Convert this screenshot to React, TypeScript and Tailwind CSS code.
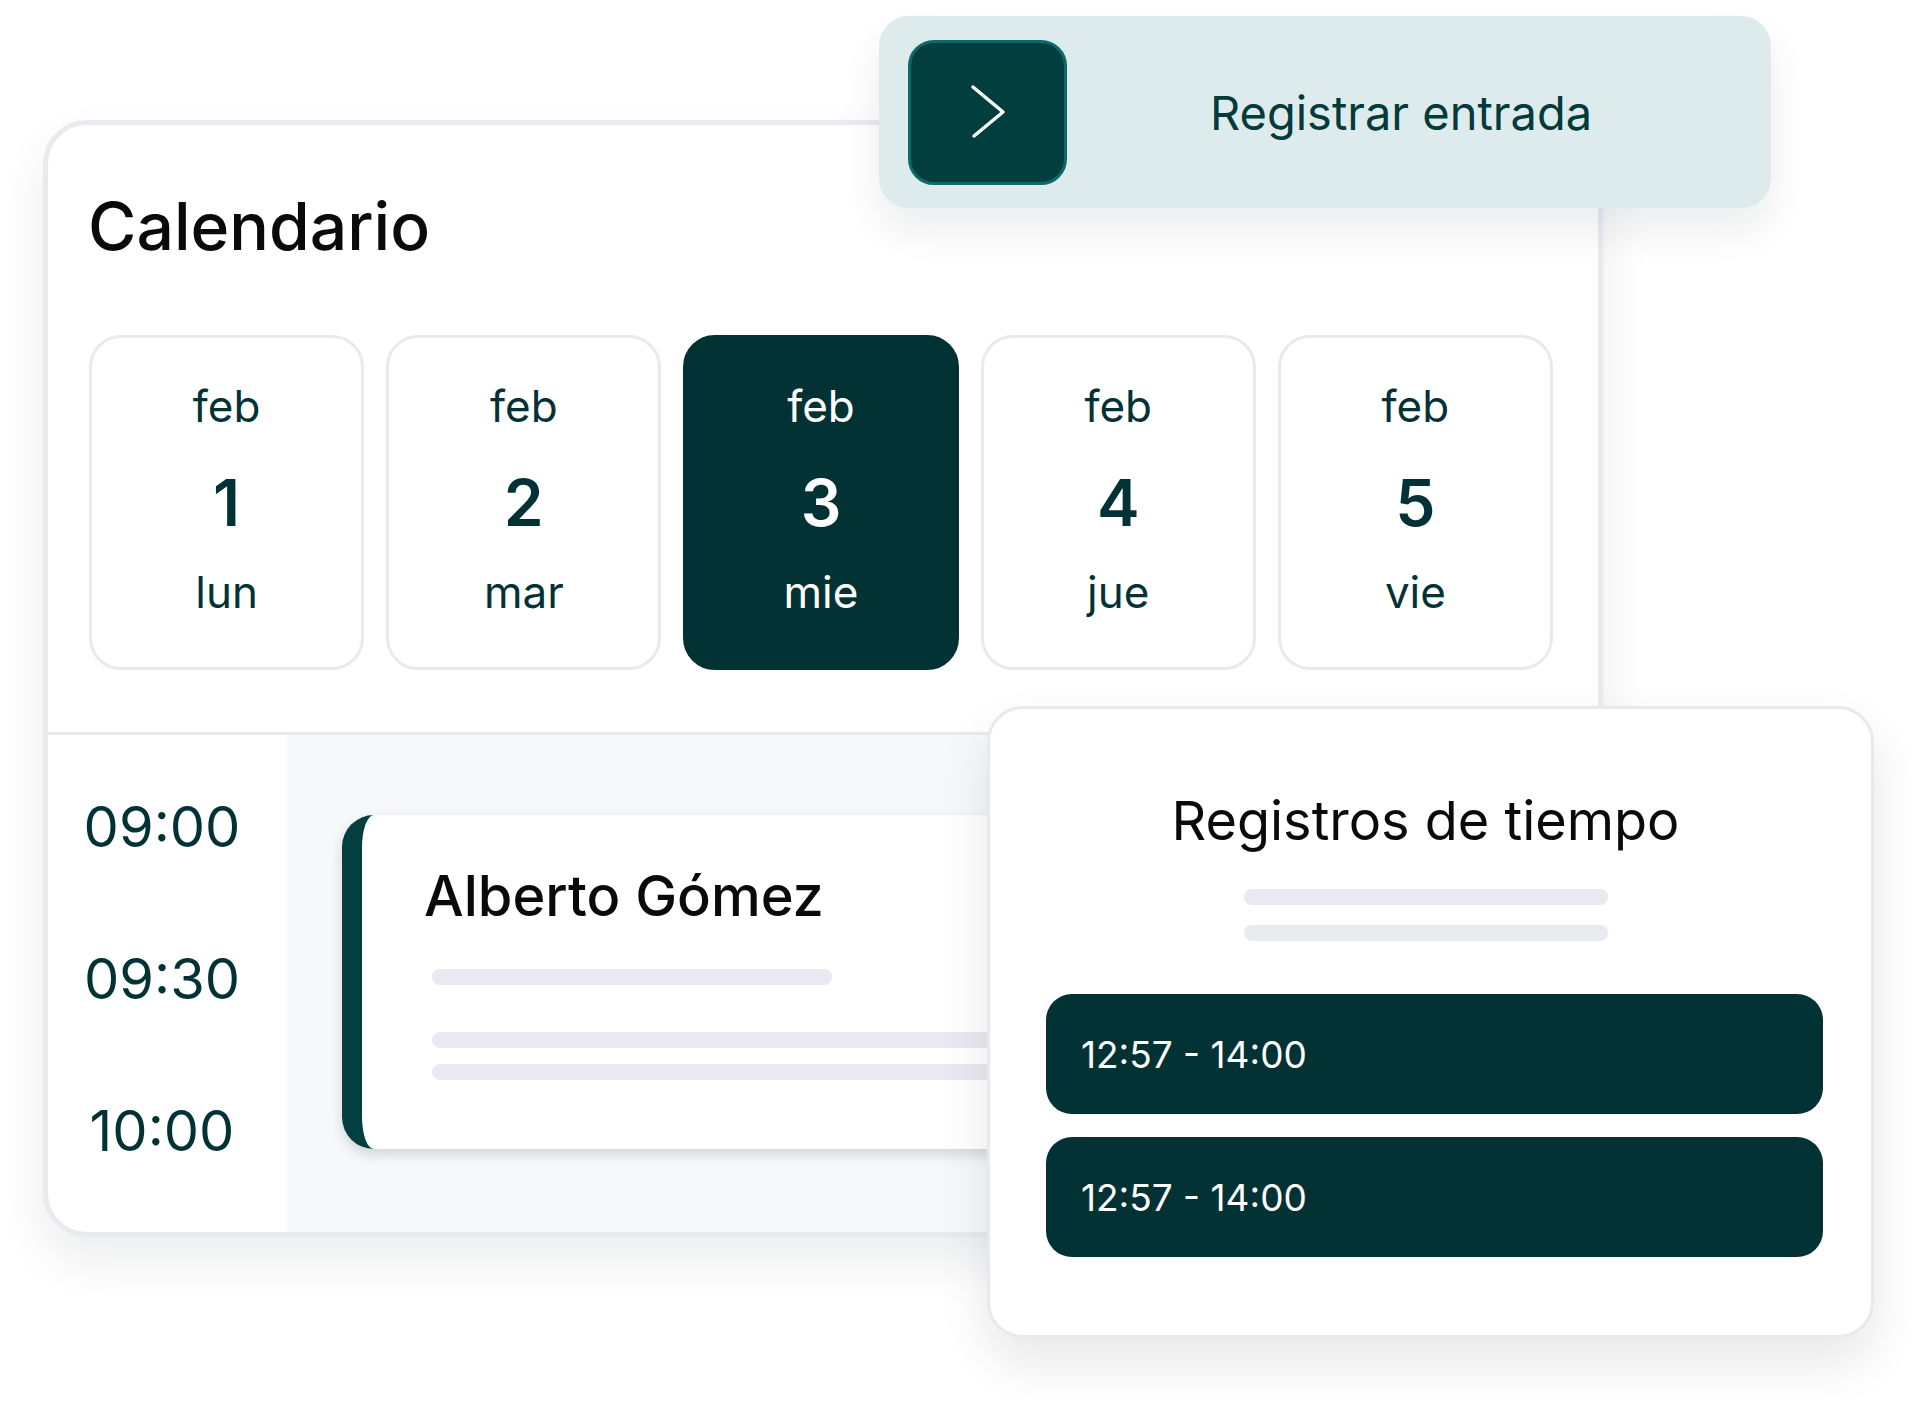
const days = [
  { month: "feb", num: "1", name: "lun" },
  { month: "feb", num: "2", name: "mar" },
  { month: "feb", num: "3", name: "mie", active: true },
  { month: "feb", num: "4", name: "jue" },
  { month: "feb", num: "5", name: "vie" },
];

const hours = ["09:00", "09:30", "10:00"];

function DayCard({ month, num, name, active }: { month: string; num: string; name: string; active?: boolean }) {
  return (
    <div
      className={
        active
          ? "h-[335px] rounded-[32px] border-[3px] border-[#023234] bg-[#023234] text-white flex flex-col items-center pt-[46px]"
          : "h-[335px] rounded-[32px] border-[3px] border-[#e9eaf0] bg-white text-[#033236] flex flex-col items-center pt-[46px]"
      }
    >
      <span className="text-[44px] leading-none">{month}</span>
      <span className="mt-[43px] text-[64px] leading-none font-semibold">{num}</span>
      <span className="mt-[35px] text-[44px] leading-none">{name}</span>
    </div>
  );
}

function Bar({ className }: { className: string }) {
  return <div className={"h-[16px] rounded-full bg-[#e9eaef] " + className} />;
}

export default function App() {
  return (
    <div className="relative w-[1920px] h-[1409px] bg-white overflow-hidden font-[Inter,sans-serif]">
      {/* calendar */}
      <div className="pt-[120px] pl-[43px]">
        <div className="w-[1560px] h-[1117px] rounded-[44px] border-[5px] border-[#e9eaf0] bg-white overflow-hidden flex flex-col shadow-[0_24px_50px_rgba(16,24,40,0.08)]">
          <h1 className="pt-[68px] pl-[40px] text-[66px] leading-none font-medium text-[#0a0a0a]">Calendario</h1>

          <div className="mt-[76px] pl-[41px] pr-[45px] grid grid-cols-5 gap-[22px]">
            {days.map((d) => (
              <DayCard key={d.num} {...d} />
            ))}
          </div>

          <div className="mt-[62px] border-t-[3px] border-[#e9eaf0] flex-1 flex">
            <div className="w-[239px] pr-[11px] pt-[64px] flex flex-col items-center gap-[96px] text-[#033236]">
              {hours.map((h) => (
                <span key={h} className="text-[56px] leading-none">{h}</span>
              ))}
            </div>

            <div className="flex-1 bg-[#f7f8fa] pt-[80px] pl-[55px] pr-[200px]">
              <div className="h-[334px] rounded-[32px] border-l-[20px] border-[#033f3f] bg-white pt-[53px] pl-[62px] shadow-[0_6px_14px_rgba(0,0,0,0.14)]">
                <p className="text-[56px] leading-none font-medium text-[#0a0a0a]">Alberto Gómez</p>
                <Bar className="mt-[45px] ml-[8px] w-[400px]" />
                <Bar className="mt-[47px] ml-[8px] w-[900px]" />
                <Bar className="mt-[16px] ml-[8px] w-[900px]" />
              </div>
            </div>
          </div>
        </div>
      </div>

      {/* clock-in button */}
      <div className="absolute left-[879px] top-[16px] w-[892px] h-[192px] rounded-[30px] bg-[#ddebec] flex items-center pl-[29px] pr-[36px] shadow-[0_22px_40px_rgba(16,24,40,0.08)]">
        <div className="w-[159px] h-[145px] rounded-[26px] border-[3px] border-[#0b6a6a] bg-[#033e3e] flex items-center justify-center">
          <svg width="40" height="56" viewBox="0 0 40 56" fill="none">
            <path d="M5 3 L35 28 L6 52" stroke="white" strokeWidth="3.5" strokeLinecap="round" strokeLinejoin="round" />
          </svg>
        </div>
        <span className="flex-1 text-center text-[47px] leading-none text-[#033a3a]">Registrar entrada</span>
      </div>

      {/* time entries */}
      <div className="absolute left-[987px] top-[706px] w-[887px] h-[632px] rounded-[36px] border-[3px] border-[#e8e9ef] bg-white flex flex-col items-center pt-[85px] pr-[10px] shadow-[0_24px_50px_rgba(16,24,40,0.1)]">
        <h2 className="text-[54px] leading-none text-[#0a0a0a]">Registros de tiempo</h2>
        <Bar className="mt-[41px] w-[364px]" />
        <Bar className="mt-[20px] w-[364px]" />
        <div className="mt-[53px] w-full pl-[56px] pr-[38px] flex flex-col gap-[23px]">
          {[0, 1].map((i) => (
            <div key={i} className="h-[120px] rounded-[26px] bg-[#023234] flex items-center pl-[35px] text-[37px] leading-none text-white">
              12:57 - 14:00
            </div>
          ))}
        </div>
      </div>
    </div>
  );
}
